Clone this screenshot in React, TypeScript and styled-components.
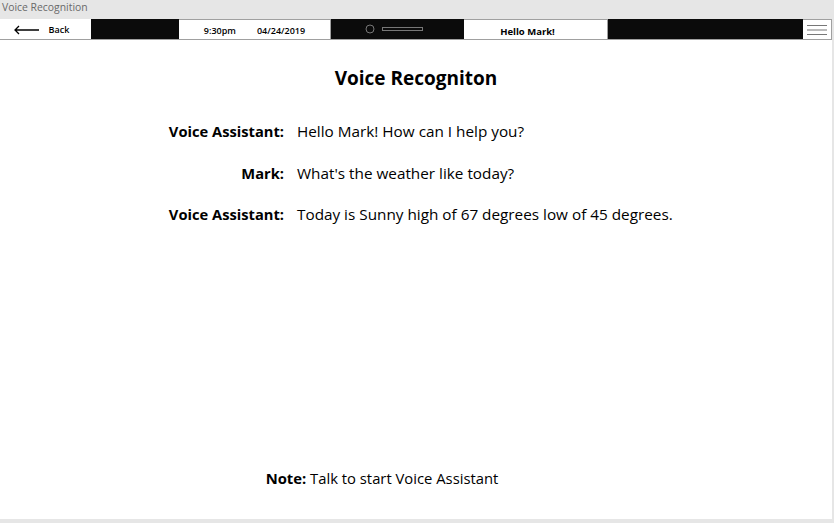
import React from 'react'
import styled, { createGlobalStyle } from 'styled-components'

const Global = createGlobalStyle`
  html, body { margin: 0; padding: 0; background: #e6e6e6; }
  body { font-family: "Open Sans", "Noto Sans", sans-serif; color: #000; }
`

const lines = [
  { who: 'Voice Assistant:', text: 'Hello Mark! How can I help you?' },
  { who: 'Mark:', text: "What's the weather like today?" },
  { who: 'Voice Assistant:', text: 'Today is Sunny high of 67 degrees low of 45 degrees.' },
]

const App = () => {
  return (
    <Window>
      <Global />
      <TitleBar>Voice Recognition</TitleBar>
      <Toolbar>
        <Cell w={91}>
          <BackBtn>
            <svg width="26" height="10" viewBox="0 0 26 10">
              <path d="M1 5 H25 M5 1 L1 5 L5 9" stroke="#000" strokeWidth="1.3" fill="none" />
            </svg>
            <span>Back</span>
          </BackBtn>
        </Cell>
        <Dark w={88} />
        <Cell w={152} bordered>
          <Clock>
            <span>9:30pm</span>
            <span>04/24/2019</span>
          </Clock>
        </Cell>
        <Dark w={133}>
          <svg width="70" height="10" viewBox="0 0 70 10">
            <circle cx="6" cy="5" r="4" stroke="#777" strokeWidth="1" fill="none" />
            <rect x="18.5" y="3.5" width="40" height="3" stroke="#777" strokeWidth="1" fill="none" />
          </svg>
        </Dark>
        <Cell w={144} bordered>
          <Greeting>Hello Mark!</Greeting>
        </Cell>
        <Dark w={195} />
        <Cell w={29} bordered>
          <svg width="20" height="12" viewBox="0 0 20 12">
            <path d="M0 1.5 H20 M0 6 H20 M0 10.5 H20" stroke="#777" strokeWidth="1" />
          </svg>
        </Cell>
      </Toolbar>
      <Content>
        <Heading>Voice Recogniton</Heading>
        <Dialog>
          {lines.map((l, i) => (
            <React.Fragment key={i}>
              <Who>{l.who}</Who>
              <Said>{l.text}</Said>
            </React.Fragment>
          ))}
        </Dialog>
        <Note>
          <b>Note:</b> Talk to start Voice Assistant
        </Note>
      </Content>
    </Window>
  )
}

export default App

const Window = styled.div`
  width: 834px;
  height: 523px;
  display: flex;
  flex-direction: column;
  background: #e6e6e6;
  overflow: hidden;
`
const TitleBar = styled.div`
  height: 19px;
  line-height: 15px;
  padding-left: 2px;
  font-size: 10.4px;
  color: #6a6a6a;
  font-family: "Open Sans", sans-serif;
`
const Toolbar = styled.div`
  display: flex;
  height: 21px;
  width: 832px;
  background: #fff;
  border-bottom: 1px solid #a0a0a0;
  box-sizing: border-box;
`
const Cell = styled.div<{ w: number; bordered?: boolean }>`
  width: ${p => p.w}px;
  height: 100%;
  display: flex;
  align-items: center;
  justify-content: center;
  background: #fff;
  box-sizing: border-box;
  border-top: ${p => (p.bordered ? '1px solid #a0a0a0' : 'none')};
  border-right: ${p => (p.bordered ? '1px solid #a0a0a0' : 'none')};
`
const Dark = styled.div<{ w: number }>`
  width: ${p => p.w}px;
  height: 100%;
  background: #0b0b0b;
  display: flex;
  align-items: center;
  justify-content: center;
  padding-left: 2px;
  box-sizing: border-box;
`
const BackBtn = styled.div`
  display: flex;
  align-items: center;
  gap: 9px;
  padding-top: 1px;
  padding-right: 8px;
  span {
    font-size: 9px;
    font-weight: 600;
  }
`
const Clock = styled.div`
  display: flex;
  gap: 21px;
  font-size: 9px;
  font-weight: 600;
  padding-top: 1px;
`
const Greeting = styled.div`
  font-size: 9.5px;
  font-weight: 700;
  padding-top: 3px;
  padding-right: 16px;
`
const Content = styled.div`
  flex: 1;
  width: 832px;
  margin-bottom: 4px;
  background: #fff;
  display: flex;
  flex-direction: column;
  align-items: center;
`
const Heading = styled.h1`
  margin: 24px 0 0;
  font-size: 19px;
  font-weight: 700;
  line-height: 28px;
`
const Dialog = styled.div`
  display: grid;
  grid-template-columns: 284px 1fr;
  column-gap: 13px;
  row-gap: 18.5px;
  width: 100%;
  margin-top: 28px;
  font-size: 15.3px;
  line-height: 23px;
`
const Who = styled.div`
  text-align: right;
  font-weight: 700;
  font-size: 14.7px;
`
const Said = styled.div``
const Note = styled.div`
  margin-top: auto;
  margin-bottom: 31px;
  padding-right: 68px;
  font-size: 14.8px;
  b { font-weight: 700; }
`
